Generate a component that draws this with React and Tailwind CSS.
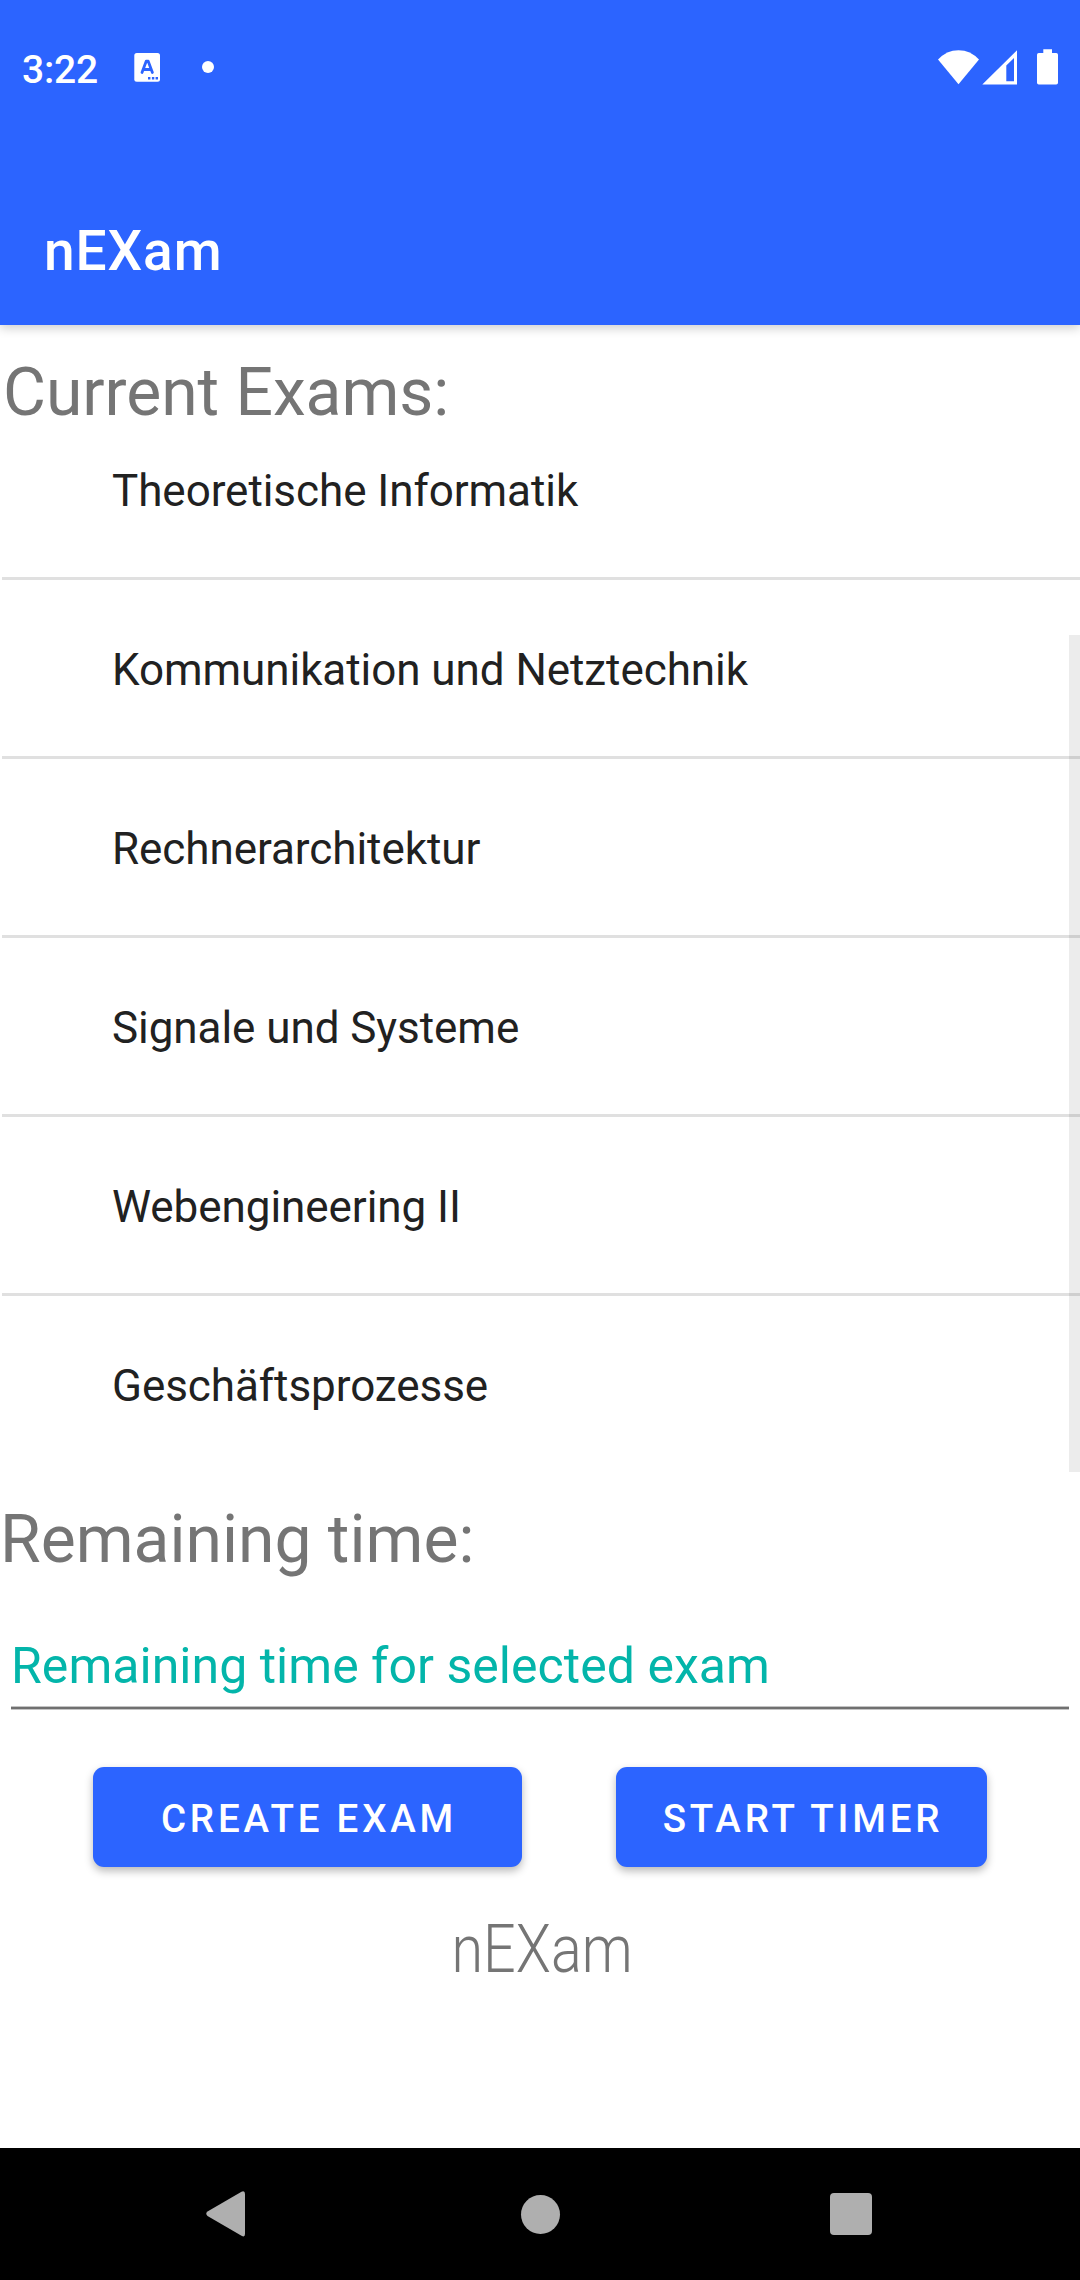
const exams = [
  'Theoretische Informatik',
  'Kommunikation und Netztechnik',
  'Rechnerarchitektur',
  'Signale und Systeme',
  'Webengineering II',
  'Geschäftsprozesse',
];

function StatusBar() {
  return (
    <div className="flex h-[136px] items-center justify-between pl-[22px] pr-[21px]">
      <div className="flex items-center">
        <span className="mt-[3px] w-[76px] translate-y-px text-[39px] font-medium leading-none tracking-[-0.2px]">3:22</span>
        <svg className="mb-px ml-[36px]" width="27" height="29" viewBox="0 0 27 29">
          <rect x="0.3" y="0" width="25.7" height="28.7" rx="2.5" fill="#fff" />
          <path d="M8 19.5 L12.2 8.2 H14.2 L18.4 19.5 M9.8 16.5 H16.6" fill="none" stroke="#2c64ff" strokeWidth="2.8" strokeLinecap="round" strokeLinejoin="round" />
          <path d="M14 24h2.4v2.4H14zM17.9 24h2.4v2.4h-2.4zM21.6 24H24v2.4h-2.4z" fill="#2c64ff" />
        </svg>
        <span className="mb-0.5 ml-[41px] size-3 rounded-full bg-white" />
      </div>
      <div className="mb-0.5 flex items-center">
        <svg width="41" height="36" viewBox="0 0 41 36">
          <path d="M20.5 35.2 L0 10.6 Q8.5 1.2 20.5 1.2 T41 10.6 Z" fill="#fff" />
        </svg>
        <svg className="ml-[3px]" width="35" height="36" viewBox="0 0 35 36">
          <path fillRule="evenodd" d="M35 1.2 V35.6 H0.3 Z M32 9 L24.3 16.6 V32.2 H32 Z" fill="#fff" />
        </svg>
        <svg className="ml-5" width="22" height="36" viewBox="0 0 22 36">
          <path d="M6.3 0.3 H15 V4 H19.2 Q21 4 21 5.8 V33.8 Q21 35.6 19.2 35.6 H1.8 Q0 35.6 0 33.8 V5.8 Q0 4 1.8 4 H6.3 Z" fill="#fff" />
        </svg>
      </div>
    </div>
  );
}

function Button({ className, children }) {
  return (
    <button className={`${className} h-[100px] rounded-[11px] bg-[#2c64ff] pb-[26px] pl-[3px] pt-[29px] text-[38.5px] font-medium leading-[45px] tracking-[3.8px] text-white shadow-[0_4px_8px_rgba(0,0,0,0.28)]`}>
      {children}
    </button>
  );
}

export default function App() {
  return (
    <div className="flex h-[2280px] w-[1080px] flex-col overflow-hidden bg-white font-[Roboto,sans-serif]">
      <header className="relative z-10 flex h-[325px] shrink-0 flex-col bg-[#2c64ff] text-white shadow-[0_3px_10px_rgba(0,0,0,0.2)]">
        <StatusBar />
        <h1 className="mt-[83px] pl-[44px] text-[55px] font-medium leading-[64px] tracking-[0.9px]">nEXam</h1>
      </header>
      <main className="flex grow flex-col">
        <h2 className="h-[120px] shrink-0 pl-[3px] pt-[29px] text-[66px] leading-[78px] tracking-[-0.05px] text-[#757575]">Current Exams:</h2>
        <div className="relative h-[1027px] shrink-0 overflow-hidden pl-[2px]">
          <ul className="-mt-11">
            {exams.map((exam) => (
              <li key={exam} className="h-[179px] border-b-[3px] border-[#e0e0e0] pl-[110px] pt-[64px] text-[44px] leading-[52px] tracking-[-0.06px] text-[#212121]">
                {exam}
              </li>
            ))}
          </ul>
          <span className="absolute right-0 top-[190px] h-[837px] w-[11px] bg-black/[0.075]" />
        </div>
        <h2 className="mt-[29px] text-[66px] leading-[78px] text-[#757575]">Remaining time:</h2>
        <div className="mx-[11px] mt-[58px]">
          <p className="h-[69px] text-[50px] leading-[58px] tracking-[0.03px] text-[#03b5aa]">Remaining time for selected exam</p>
          <div className="h-1 border-y border-[#c4c4c4] bg-[#707070]" />
        </div>
        <div className="mt-[57px] flex gap-[94px] pl-[93px]">
          <Button className="w-[429px]">CREATE EXAM</Button>
          <Button className="w-[371px]">START TIMER</Button>
        </div>
        <div className="mt-[44px] pl-[4px] text-center text-[66px] font-light leading-[78px] text-[#757575]">
          <span className="inline-block scale-x-[0.87]">nEXam</span>
        </div>
      </main>
      <nav className="flex h-[132px] shrink-0 items-center justify-between bg-black pl-[206px] pr-[208px]">
        <svg width="40" height="46" viewBox="0 0 40 46">
          <path d="M35.5 0.7 Q39 -0.8 39 3 V43 Q39 46.8 35.5 44.8 L1.5 25 Q-1 22.8 1.5 20.6 Z" fill="#afafaf" />
        </svg>
        <span className="ml-[5px] size-[39px] rounded-full bg-[#afafaf]" />
        <span className="size-[42px] rounded-[4px] bg-[#afafaf]" />
      </nav>
    </div>
  );
}
